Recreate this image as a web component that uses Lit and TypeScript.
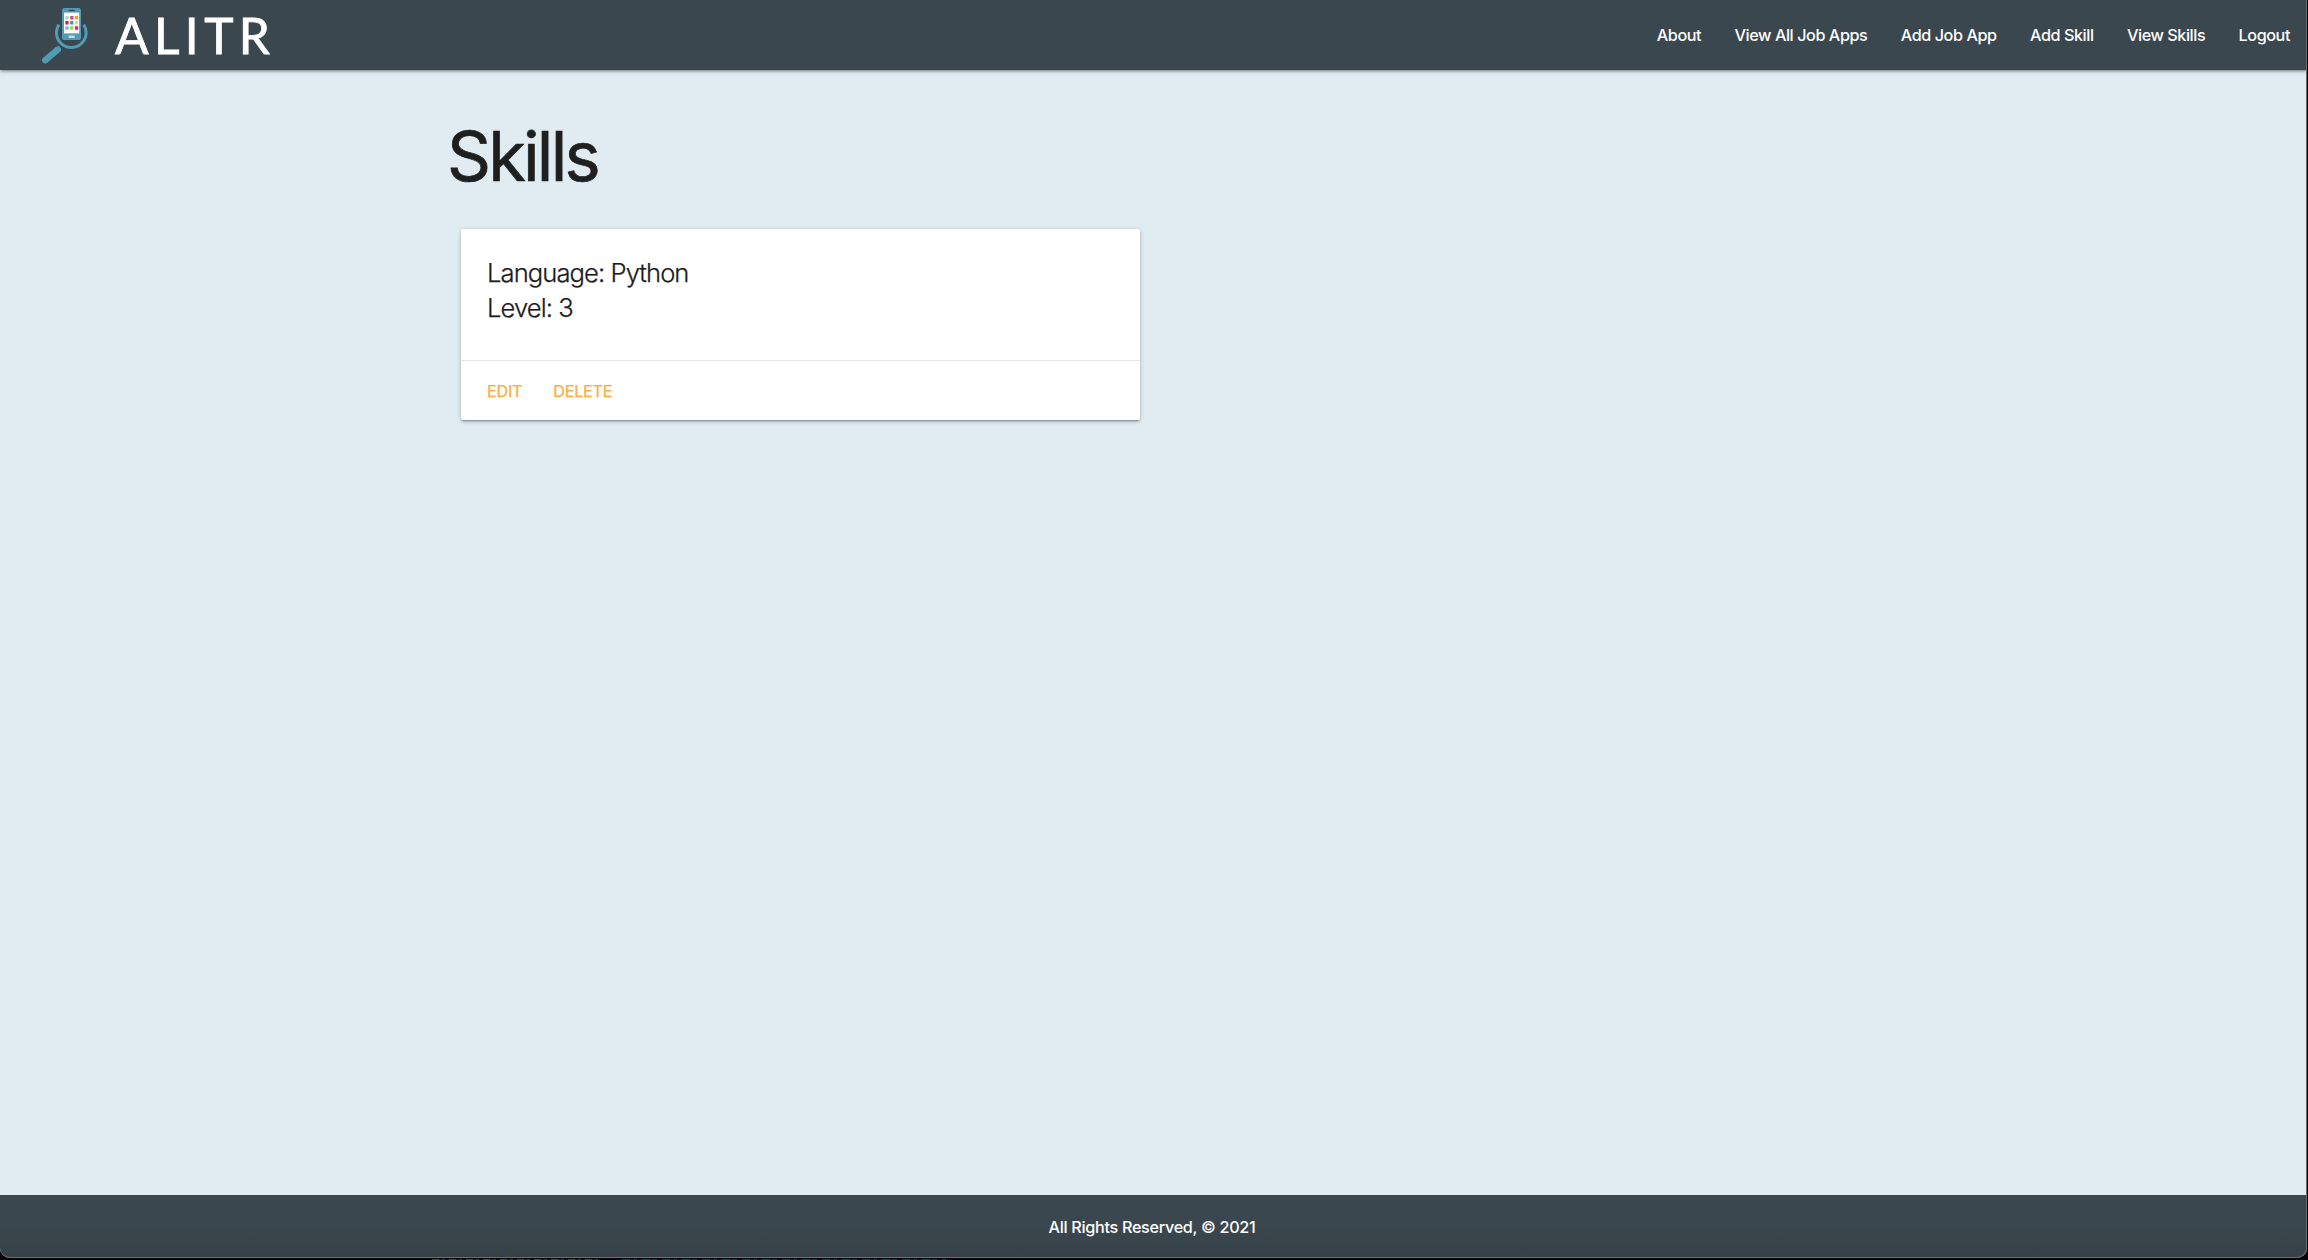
import { LitElement, html, css, svg } from "lit";
import { customElement, property } from "lit/decorators.js";

@customElement("brand-mark")
class BrandMark extends LitElement {
  static styles = css`
    :host { display: block; width: 48px; height: 64px; }
    svg { display: block; }
  `;
  render() {
    const colors = ["#a9dcc0", "#e0486a", "#f0a030", "#e02434", "#4796b0", "#c0e48c", "#7cb8e0", "#a4d82c", "#e8148c"];
    return html`<svg width="48" height="64" viewBox="0 0 48 64">
      <path d="M18.9 24.6 A14.8 14.8 0 1 0 43.7 24.6" fill="none" stroke="#519cb3" stroke-width="3"/>
      <path d="M17.8 49.6 L5.2 60.2" stroke="#519cb3" stroke-width="6.4" stroke-linecap="round"/>
      <path d="M15 47.2 L19.8 46.6 L20.2 51.2 L17 53.6 Z" fill="#519cb3"/>
      <rect x="22" y="8" width="19" height="32" rx="2.6" fill="#519cb3"/>
      <rect x="28.6" y="9.8" width="6" height="1.2" rx=".6" fill="#3b474e"/>
      <rect x="24" y="12.6" width="15.2" height="20.8" fill="#fff"/>
      ${colors.map((c, i) => svg`<rect x=${25.3 + (i % 3) * 4.8} y=${16 + Math.floor(i / 3) * 5.1} width="3.3" height="3.5" rx=".4" fill=${c}/>`)}
      <rect x="28.6" y="35.4" width="6.2" height="2.6" rx=".8" fill="#c9dde5"/>
    </svg>`;
  }
}

@customElement("skill-card")
class SkillCard extends LitElement {
  @property() language = "";
  @property({ type: Number }) level = 0;
  static styles = css`
    :host {
      display: block; width: 679px; background: #fff; border-radius: 2px;
      box-shadow: 0 2px 2px rgba(0,0,0,.14), 0 3px 1px -2px rgba(0,0,0,.12), 0 1px 5px rgba(0,0,0,.2);
    }
    .content {
      box-sizing: border-box; height: 131px; padding: 26px 26px;
      font-size: 25.6px; font-weight: 300; line-height: 35px; letter-spacing: -.93px; color: #1c1c1c;
      -webkit-text-stroke: .25px #1c1c1c;
    }
    .actions {
      box-sizing: border-box; height: 60px; border-top: 1px solid #e8e8e8; padding: 0 26px;
      display: flex; align-items: center; gap: 31px;
    }
    .link {
      color: #ffab40; text-decoration: none; font-size: 16.2px; letter-spacing: -.25px; text-transform: uppercase;
      -webkit-text-stroke: .25px #ffab40;
    }
  `;
  render() {
    return html`
      <div class="content"><div>Language: ${this.language}</div><div>Level: ${this.level}</div></div>
      <div class="actions"><a class="link" href="#">Edit</a><a class="link" href="#">Delete</a></div>`;
  }
}

@customElement("app-root")
class AppRoot extends LitElement {
  static styles = css`
    :host { display: block; font-family: Inter, "Liberation Sans", sans-serif; }
    .screen { height: 1260px; background: #08040a; overflow: hidden; display: flex; flex-direction: column; }
    .window {
      box-sizing: border-box; width: 2307px; height: 1258px; overflow: hidden; background: #e1ecf2;
      border-radius: 0 0 10px 10px; display: flex; flex-direction: column; position: relative;
    }
    .window::after {
      content: ""; position: absolute; inset: 0; border: solid #66706f; border-width: 0 1px 1px 0;
      border-radius: 0 0 10px 10px; pointer-events: none;
    }
    .nav {
      height: 70px; flex: none; background: #3b474e; color: #fff; display: flex; justify-content: space-between;
      box-shadow: 0 2px 2px rgba(0,0,0,.14), 0 3px 1px -2px rgba(0,0,0,.12), 0 1px 5px rgba(0,0,0,.2);
    }
    .brand { display: flex; padding-left: 40px; gap: 27px; }
    .name { font-family: Lato, sans-serif; font-size: 49.6px; line-height: 71px; letter-spacing: 5.4px; font-weight: 400; -webkit-text-stroke: .8px #fff; }
    .links { display: flex; gap: 33.4px; padding-right: 17px; line-height: 70px; }
    .item { color: #fff; text-decoration: none; font-size: 16.2px; font-weight: 500; letter-spacing: -.43px; white-space: nowrap; }
    .main { flex: 1; padding: 45px 0 0 447px; }
    .title { margin: 0 0 30px; font-size: 68.6px; line-height: 84px; font-weight: 400; letter-spacing: -2.8px; color: #1e1f1f; -webkit-text-stroke: .7px #1e1f1f; }
    .card { margin-left: 14px; }
    .footer {
      height: 63px; flex: none; background: linear-gradient(#3b474e 50%, #354047); color: #fff; padding-right: 3px;
      text-align: center; font-size: 16.2px; font-weight: 500; letter-spacing: -.3px; line-height: 64px;
    }
    .under { display: flex; height: 1px; margin-top: 1px; padding-left: 432px; gap: 20px; }
    .dash { height: 1px; }
    .warm { width: 170px; background: repeating-linear-gradient(90deg, #574a45 0 7px, #1a1214 7px 10px, #443a38 10px 13px, #08040a 13px 17px); }
    .teal { width: 324px; background: repeating-linear-gradient(90deg, #1b4644 0 8px, #08181a 8px 11px, #173a3a 11px 15px, #08040a 15px 20px); }
  `;
  render() {
    const items = ["About", "View All Job Apps", "Add Job App", "Add Skill", "View Skills", "Logout"];
    return html`<div class="screen">
      <div class="window">
        <nav class="nav">
          <div class="brand"><brand-mark></brand-mark><span class="name">ALITR</span></div>
          <div class="links">${items.map((t) => html`<a class="item" href="#">${t}</a>`)}</div>
        </nav>
        <main class="main">
          <h1 class="title">Skills</h1>
          <skill-card class="card" language="Python" level="3"></skill-card>
        </main>
        <footer class="footer">All Rights Reserved, © 2021</footer>
      </div>
      <div class="under"><div class="dash warm"></div><div class="dash teal"></div></div>
    </div>`;
  }
}
